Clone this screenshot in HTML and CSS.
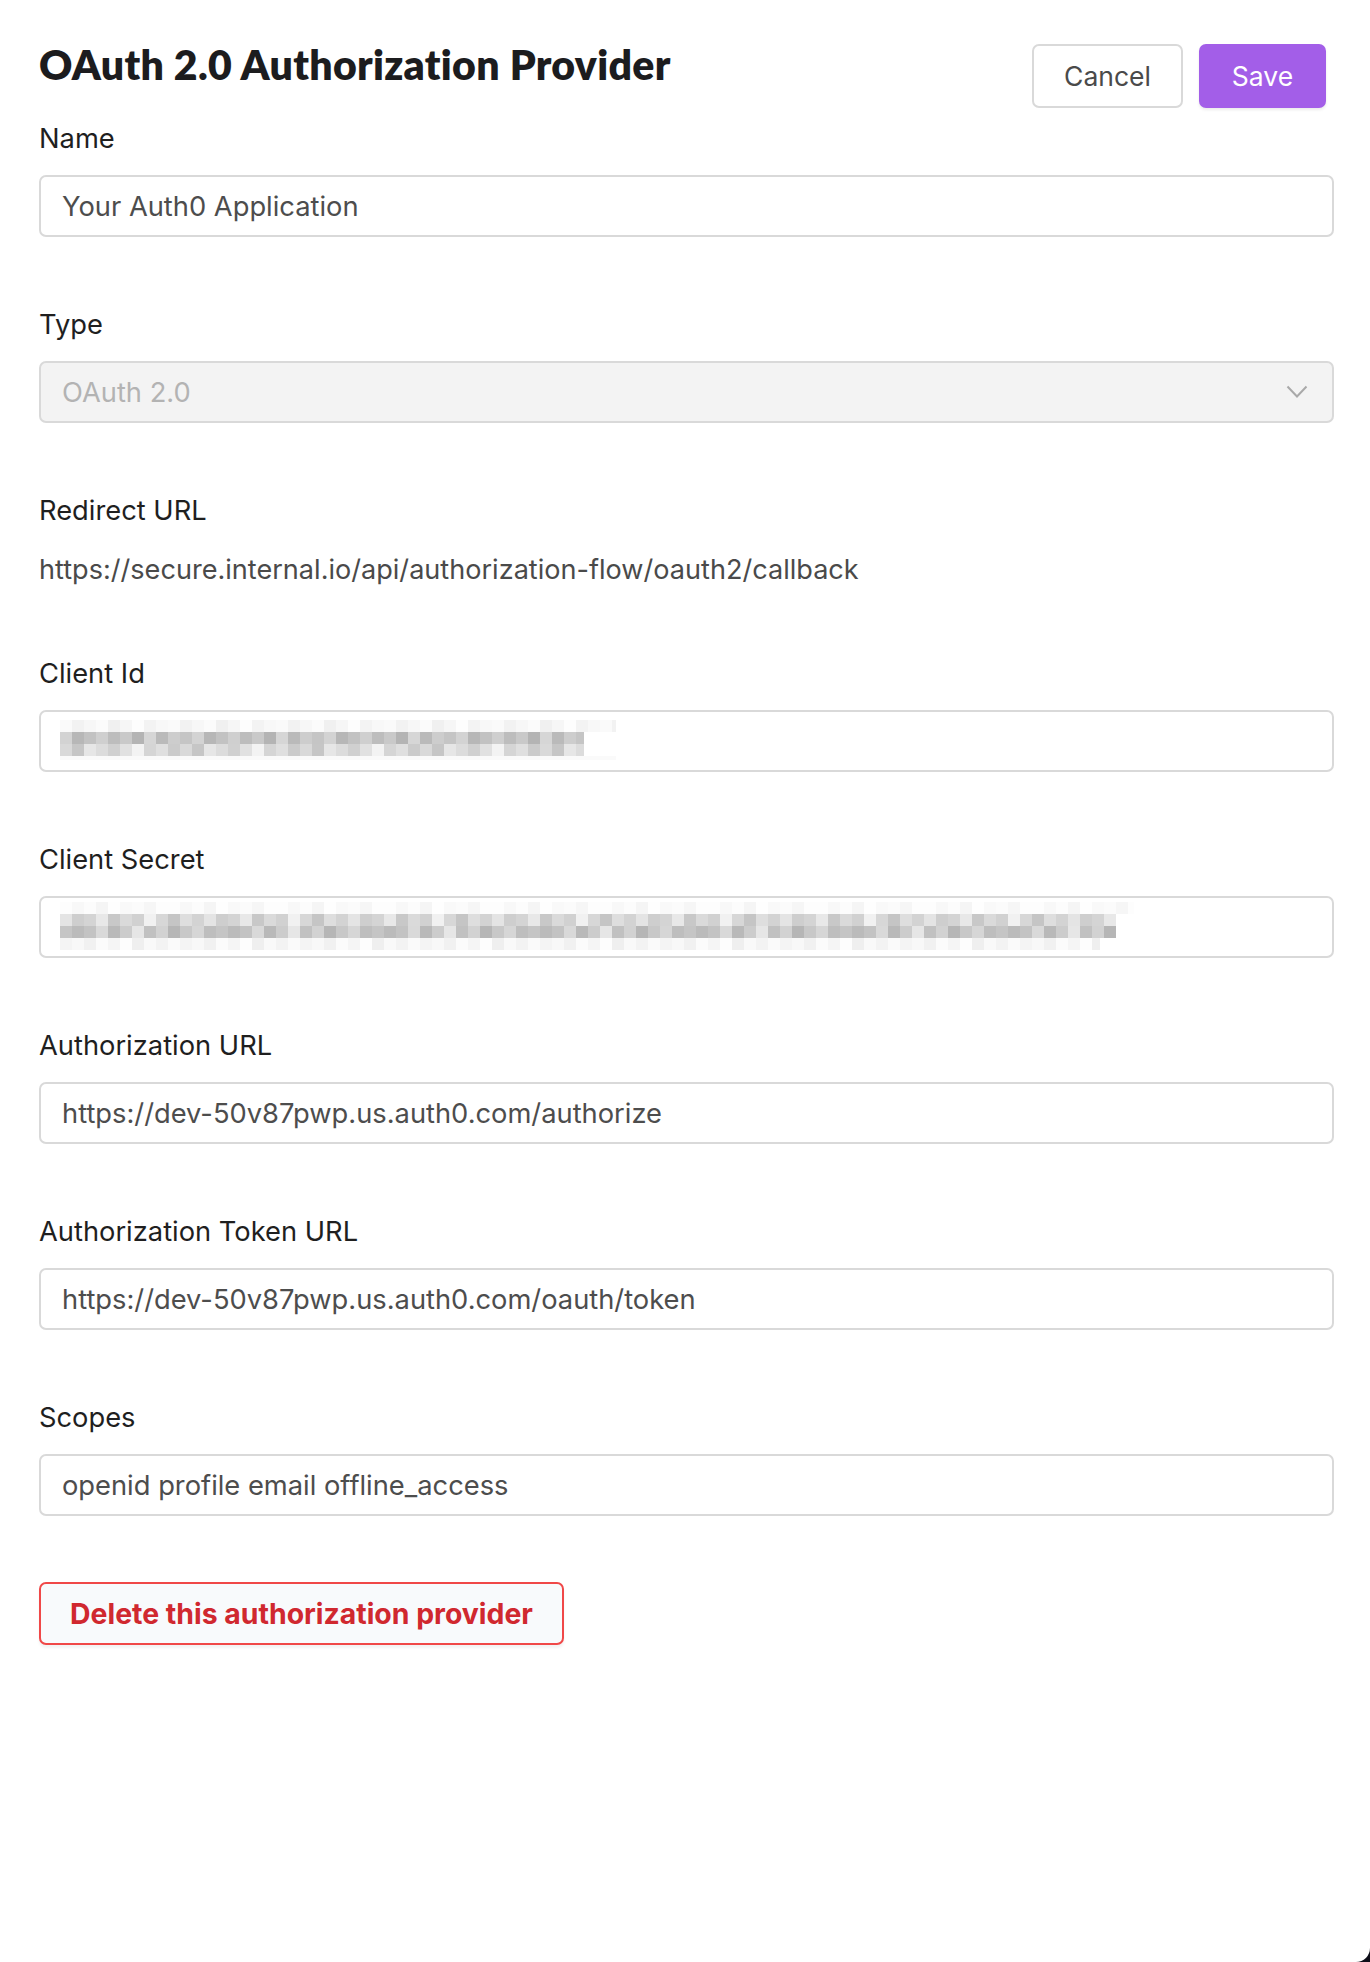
FILE: index.html
```html
<!DOCTYPE html>
<html lang="en">
<head>
<meta charset="utf-8">
<title>OAuth 2.0 Authorization Provider</title>
<link rel="stylesheet" href="styles.css">
</head>
<body>
<div class="page">
  <header class="header">
    <h1 class="title">OAuth 2.0 Authorization Provider</h1>
    <div class="actions">
      <button class="btn btn-cancel">Cancel</button>
      <button class="btn btn-save">Save</button>
    </div>
  </header>

  <form class="form">
    <div class="field">
      <label class="label">Name</label>
      <div class="input">Your Auth0 Application</div>
    </div>

    <div class="field">
      <label class="label">Type</label>
      <div class="input select">
        <span>OAuth 2.0</span>
        <svg class="chevron" width="22" height="14" viewBox="0 0 22 14"><path d="M1.5 1.5 L11 11.5 L20.5 1.5" fill="none" stroke="#a9a9a9" stroke-width="2"/></svg>
      </div>
    </div>

    <div class="field">
      <label class="label">Redirect URL</label>
      <div class="static">https://secure.internal.io/api/authorization-flow/oauth2/callback</div>
    </div>

    <div class="field">
      <label class="label">Client Id</label>
      <div class="input masked">
        <svg class="mosaic" width="556" height="42" viewBox="0 0 556 42">
          <defs>
            <pattern id="idF" width="108" height="12" patternUnits="userSpaceOnUse">
              <rect x="0" width="12" height="12" fill="#fafafa"/><rect x="12" width="12" height="12" fill="#f2f2f2"/><rect x="24" width="12" height="12" fill="#f7f7f7"/><rect x="36" width="12" height="12" fill="#fbfbfb"/><rect x="48" width="12" height="12" fill="#f0f0f0"/><rect x="60" width="12" height="12" fill="#f6f6f6"/><rect x="72" width="12" height="12" fill="#fdfdfd"/><rect x="84" width="12" height="12" fill="#f3f3f3"/><rect x="96" width="12" height="12" fill="#f8f8f8"/>
            </pattern>
            <pattern id="idD" width="132" height="12" patternUnits="userSpaceOnUse">
              <rect x="0" width="12" height="12" fill="#d3d3d3"/><rect x="12" width="12" height="12" fill="#b7b7b7"/><rect x="24" width="12" height="12" fill="#c2c2c2"/><rect x="36" width="12" height="12" fill="#cfcfcf"/><rect x="48" width="12" height="12" fill="#bdbdbd"/><rect x="60" width="12" height="12" fill="#c9c9c9"/><rect x="72" width="12" height="12" fill="#b4b4b4"/><rect x="84" width="12" height="12" fill="#d6d6d6"/><rect x="96" width="12" height="12" fill="#bababa"/><rect x="108" width="12" height="12" fill="#cdcdcd"/><rect x="120" width="12" height="12" fill="#c5c5c5"/>
            </pattern>
            <pattern id="idM" width="120" height="12" patternUnits="userSpaceOnUse">
              <rect x="0" width="12" height="12" fill="#d9d9d9"/><rect x="12" width="12" height="12" fill="#c6c6c6"/><rect x="24" width="12" height="12" fill="#e6e6e6"/><rect x="36" width="12" height="12" fill="#dcdcdc"/><rect x="48" width="12" height="12" fill="#d0d0d0"/><rect x="60" width="12" height="12" fill="#e1e1e1"/><rect x="72" width="12" height="12" fill="#f3f3f3"/><rect x="84" width="12" height="12" fill="#d5d5d5"/><rect x="96" width="12" height="12" fill="#dfdfdf"/><rect x="108" width="12" height="12" fill="#cbcbcb"/>
            </pattern>
          </defs>
          <rect x="0" y="0" width="556" height="12" fill="url(#idF)"/>
          <rect x="0" y="12" width="524" height="12" fill="url(#idD)"/>
          <rect x="0" y="24" width="524" height="12" fill="url(#idM)"/>
          <rect x="0" y="36" width="556" height="4" fill="#fafafa"/>
        </svg>
      </div>
    </div>

    <div class="field">
      <label class="label">Client Secret</label>
      <div class="input masked">
        <svg class="mosaic" width="1074" height="50" viewBox="0 0 1074 50">
          <defs>
            <pattern id="sF" width="108" height="12" patternUnits="userSpaceOnUse">
              <rect x="0" width="12" height="12" fill="#fdfdfd"/><rect x="12" width="12" height="12" fill="#f8f8f8"/><rect x="24" width="12" height="12" fill="#fcfcfc"/><rect x="36" width="12" height="12" fill="#f5f5f5"/><rect x="48" width="12" height="12" fill="#fefefe"/><rect x="60" width="12" height="12" fill="#f9f9f9"/><rect x="72" width="12" height="12" fill="#fbfbfb"/><rect x="84" width="12" height="12" fill="#f6f6f6"/><rect x="96" width="12" height="12" fill="#fdfdfd"/>
            </pattern>
            <pattern id="sM" width="144" height="12" patternUnits="userSpaceOnUse">
              <rect x="0" width="12" height="12" fill="#e4e4e4"/><rect x="12" width="12" height="12" fill="#cecece"/><rect x="24" width="12" height="12" fill="#d4d4d4"/><rect x="36" width="12" height="12" fill="#e8e8e8"/><rect x="48" width="12" height="12" fill="#c8c8c8"/><rect x="60" width="12" height="12" fill="#dadada"/><rect x="72" width="12" height="12" fill="#d1d1d1"/><rect x="84" width="12" height="12" fill="#f1f1f1"/><rect x="96" width="12" height="12" fill="#d7d7d7"/><rect x="108" width="12" height="12" fill="#c5c5c5"/><rect x="120" width="12" height="12" fill="#dedede"/><rect x="132" width="12" height="12" fill="#d3d3d3"/>
            </pattern>
            <pattern id="sD" width="156" height="12" patternUnits="userSpaceOnUse">
              <rect x="0" width="12" height="12" fill="#c5c5c5"/><rect x="12" width="12" height="12" fill="#bbbbbb"/><rect x="24" width="12" height="12" fill="#c3c3c3"/><rect x="36" width="12" height="12" fill="#d9d9d9"/><rect x="48" width="12" height="12" fill="#b9b9b9"/><rect x="60" width="12" height="12" fill="#cccccc"/><rect x="72" width="12" height="12" fill="#e6e6e6"/><rect x="84" width="12" height="12" fill="#c1c1c1"/><rect x="96" width="12" height="12" fill="#d2d2d2"/><rect x="108" width="12" height="12" fill="#b6b6b6"/><rect x="120" width="12" height="12" fill="#c8c8c8"/><rect x="132" width="12" height="12" fill="#d6d6d6"/><rect x="144" width="12" height="12" fill="#bebebe"/>
            </pattern>
            <pattern id="sL" width="120" height="12" patternUnits="userSpaceOnUse">
              <rect x="0" width="12" height="12" fill="#f4f4f4"/><rect x="12" width="12" height="12" fill="#f8f8f8"/><rect x="24" width="12" height="12" fill="#f1f1f1"/><rect x="36" width="12" height="12" fill="#fbfbfb"/><rect x="48" width="12" height="12" fill="#f5f5f5"/><rect x="60" width="12" height="12" fill="#fdfdfd"/><rect x="72" width="12" height="12" fill="#efefef"/><rect x="84" width="12" height="12" fill="#f9f9f9"/><rect x="96" width="12" height="12" fill="#f3f3f3"/><rect x="108" width="12" height="12" fill="#fafafa"/>
            </pattern>
          </defs>
          <rect x="0" y="0" width="1074" height="12" fill="url(#sF)"/>
          <rect x="0" y="12" width="1056" height="12" fill="url(#sM)"/>
          <rect x="0" y="24" width="1056" height="12" fill="url(#sD)"/>
          <rect x="0" y="36" width="1040" height="12" fill="url(#sL)"/>
        </svg>
      </div>
    </div>

    <div class="field">
      <label class="label">Authorization URL</label>
      <div class="input">https://dev-50v87pwp.us.auth0.com/authorize</div>
    </div>

    <div class="field">
      <label class="label">Authorization Token URL</label>
      <div class="input">https://dev-50v87pwp.us.auth0.com/oauth/token</div>
    </div>

    <div class="field">
      <label class="label">Scopes</label>
      <div class="input">openid profile email offline_access</div>
    </div>
  </form>

  <div class="danger">
    <button class="btn btn-delete">Delete this authorization provider</button>
  </div>
</div>
</body>
</html>
```

FILE: styles.css
```css
html {
  background: #0d0d18;
}

body {
  margin: 0;
  font-family: "Inter", "Liberation Sans", sans-serif;
  color: #1f1f1f;
}

.page {
  min-height: 100vh;
  box-sizing: border-box;
  background: #ffffff;
  padding: 41px 36px 0 39px;
  border-bottom-right-radius: 14px;
}

.header {
  display: flex;
  justify-content: space-between;
  align-items: flex-start;
  margin-bottom: 16px;
}

.title {
  margin: 0;
  font-family: "Lato", sans-serif;
  font-weight: 800;
  font-size: 41px;
  letter-spacing: 0.3px;
  line-height: 48px;
  color: #1c1c1e;
}

.actions {
  display: flex;
  gap: 16px;
  margin-top: 3px;
  margin-right: 8px;
}

.btn {
  font-family: "Inter", "Liberation Sans", sans-serif;
  font-size: 26.5px;
  height: 64px;
  border-radius: 7px;
  cursor: pointer;
  box-sizing: border-box;
}

.btn-cancel {
  width: 151px;
  background: #ffffff;
  border: 2px solid #d9d9d9;
  color: #4a4a4a;
}

.btn-save {
  width: 127px;
  background: #a35ee8;
  border: none;
  color: #ffffff;
  box-shadow: 0 2px 3px rgba(0, 0, 0, 0.08);
}

.form {
  display: flex;
  flex-direction: column;
  gap: 73px;
}

.field {
  display: flex;
  flex-direction: column;
}

.label {
  font-size: 27.3px;
  line-height: 30px;
  color: #1f1f1f;
  margin-bottom: 21px;
}

.input {
  box-sizing: border-box;
  height: 62px;
  border: 2px solid #d9d9d9;
  border-radius: 7px;
  padding: 0 24px 0 21px;
  display: flex;
  align-items: center;
  font-size: 27.3px;
  color: #4d4d4d;
  background: #ffffff;
}

.select {
  background: #f3f3f3;
  color: #b3b3b3;
  justify-content: space-between;
}

.chevron {
  display: block;
}

.static {
  margin-top: 7px;
  font-size: 27.1px;
  line-height: 32px;
  color: #4a4a4a;
}

.masked {
  padding-left: 19px;
}

.mosaic {
  display: block;
}

.danger {
  margin-top: 66px;
}

.btn-delete {
  height: 63px;
  width: 525px;
  background: #f8fafc;
  border: 2px solid #f04848;
  color: #d0282f;
  font-weight: 700;
  font-size: 28.4px;
  box-shadow: 0 3px 3px rgba(0, 0, 0, 0.05);
}
```
